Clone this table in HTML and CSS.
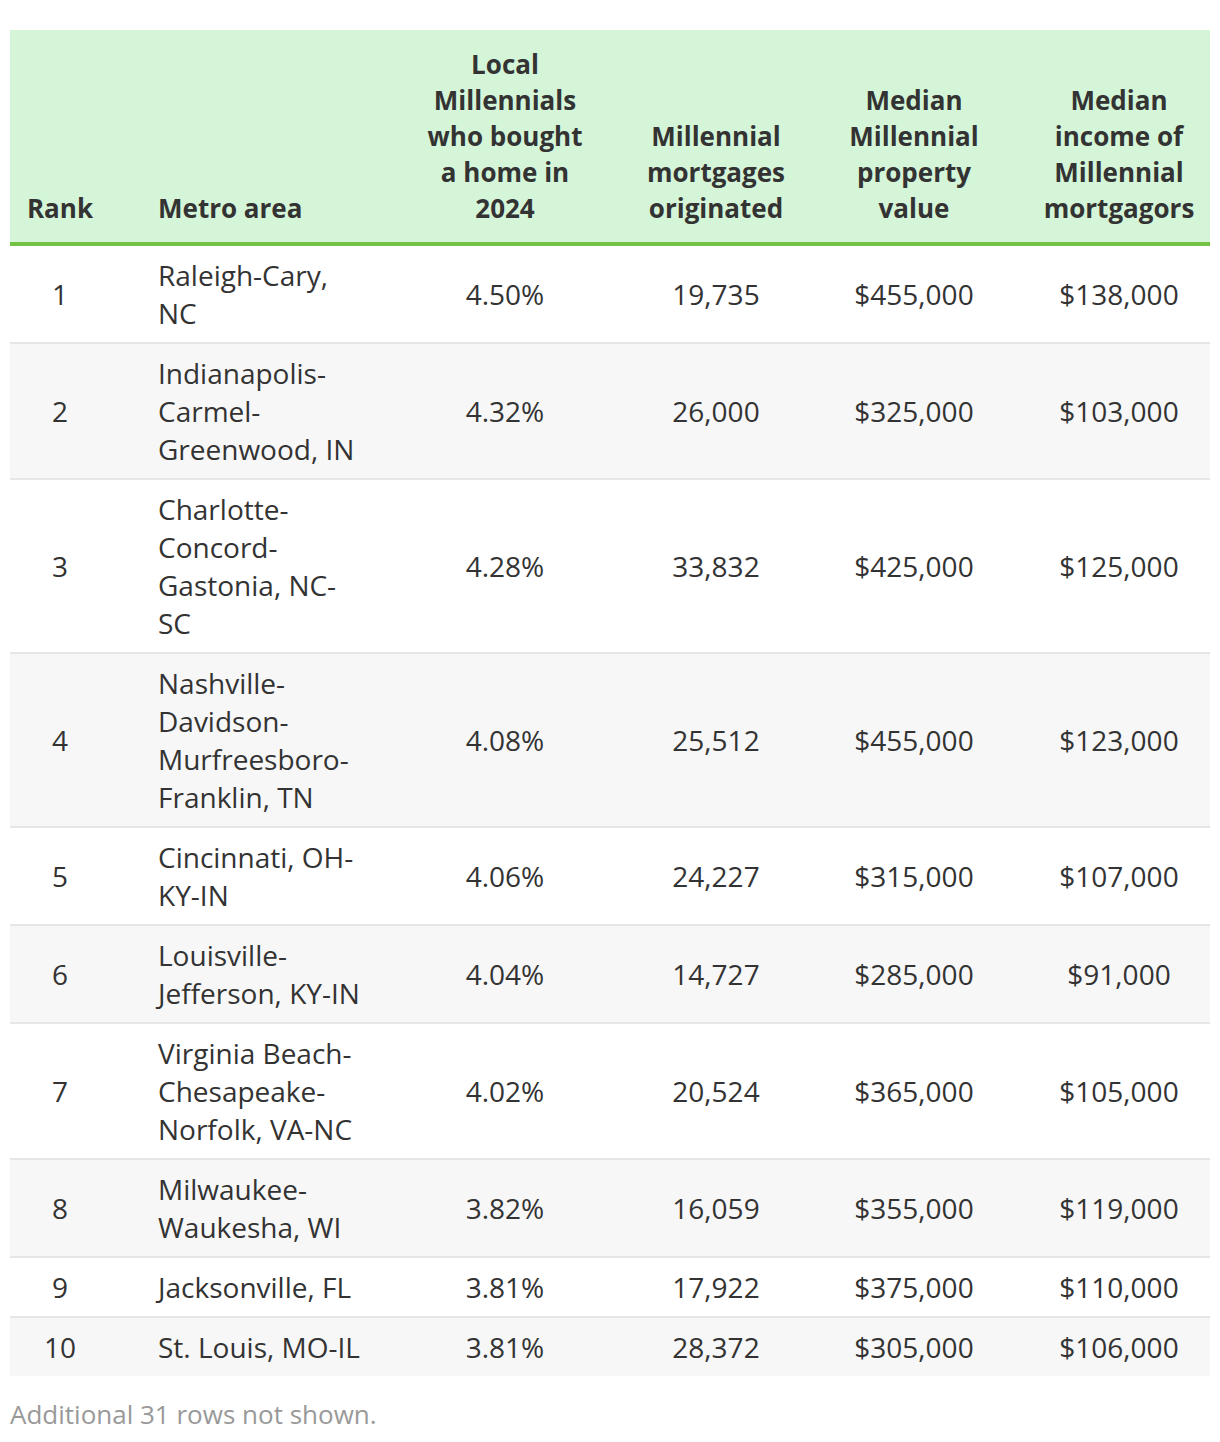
FILE: index.html
```html
<!DOCTYPE html>
<html lang="en">
<head>
<meta charset="utf-8">
<title>Millennial home buyers by metro</title>
<link rel="stylesheet" href="styles.css">
</head>
<body>
<div class="page">
  <table class="data">
    <colgroup>
      <col class="c-rank">
      <col class="c-metro">
      <col class="c-share">
      <col class="c-count">
      <col class="c-value">
      <col class="c-income">
    </colgroup>
    <thead>
      <tr>
        <th class="rank">Rank</th>
        <th class="metro">Metro area</th>
        <th class="share">Local Millennials who bought a home in 2024</th>
        <th class="count">Millennial mortgages originated</th>
        <th class="value">Median Millennial property value</th>
        <th class="income">Median income of Millennial mortgagors</th>
      </tr>
    </thead>
    <tbody>
      <tr><td class="rank">1</td><td class="metro">Raleigh-Cary, NC</td><td class="share">4.50%</td><td class="count">19,735</td><td class="value">$455,000</td><td class="income">$138,000</td></tr>
      <tr><td class="rank">2</td><td class="metro">Indianapolis-Carmel-Greenwood, IN</td><td class="share">4.32%</td><td class="count">26,000</td><td class="value">$325,000</td><td class="income">$103,000</td></tr>
      <tr><td class="rank">3</td><td class="metro">Charlotte-Concord-Gastonia, NC-SC</td><td class="share">4.28%</td><td class="count">33,832</td><td class="value">$425,000</td><td class="income">$125,000</td></tr>
      <tr><td class="rank">4</td><td class="metro">Nashville-Davidson-Murfreesboro-Franklin, TN</td><td class="share">4.08%</td><td class="count">25,512</td><td class="value">$455,000</td><td class="income">$123,000</td></tr>
      <tr><td class="rank">5</td><td class="metro">Cincinnati, OH-KY-IN</td><td class="share">4.06%</td><td class="count">24,227</td><td class="value">$315,000</td><td class="income">$107,000</td></tr>
      <tr><td class="rank">6</td><td class="metro">Louisville-Jefferson, KY-IN</td><td class="share">4.04%</td><td class="count">14,727</td><td class="value">$285,000</td><td class="income">$91,000</td></tr>
      <tr><td class="rank">7</td><td class="metro">Virginia Beach-Chesapeake-Norfolk, VA-NC</td><td class="share">4.02%</td><td class="count">20,524</td><td class="value">$365,000</td><td class="income">$105,000</td></tr>
      <tr><td class="rank">8</td><td class="metro">Milwaukee-Waukesha, WI</td><td class="share">3.82%</td><td class="count">16,059</td><td class="value">$355,000</td><td class="income">$119,000</td></tr>
      <tr><td class="rank">9</td><td class="metro">Jacksonville, FL</td><td class="share">3.81%</td><td class="count">17,922</td><td class="value">$375,000</td><td class="income">$110,000</td></tr>
      <tr><td class="rank">10</td><td class="metro">St. Louis, MO-IL</td><td class="share">3.81%</td><td class="count">28,372</td><td class="value">$305,000</td><td class="income">$106,000</td></tr>
    </tbody>
  </table>
  <p class="note">Additional 31 rows not shown.</p>
</div>
</body>
</html>
```

FILE: styles.css
```css
html, body {
  margin: 0;
  padding: 0;
  background: #ffffff;
}

.page {
  padding: 30px 10px 0;
  font-family: "Open Sans", "Noto Sans", sans-serif;
  color: #333333;
}

.data {
  width: 1200px;
  table-layout: fixed;
  border-collapse: collapse;
  border-spacing: 0;
}

.c-rank { width: 100px; }
.c-metro { width: 268px; }
.c-share { width: 254px; }
.c-count { width: 168px; }
.c-value { width: 228px; }
.c-income { width: 182px; }

.data th {
  background: #d5f5d8;
  border-bottom: 4px solid #72c344;
  font-size: 26px;
  font-weight: 700;
  line-height: 36px;
  padding-top: 16px;
  padding-bottom: 16px;
  vertical-align: bottom;
  text-align: center;
}

.data td {
  font-size: 28px;
  font-weight: 400;
  line-height: 38px;
  padding-top: 10px;
  padding-bottom: 10px;
  vertical-align: middle;
  text-align: center;
}

.data tbody tr:nth-child(even) td {
  background: #f7f7f7;
}

.data tbody tr + tr td {
  border-top: 2px solid #e6e6e6;
}

.data .rank { padding-left: 12px; padding-right: 12px; }
.data .metro { padding-left: 48px; padding-right: 14px; text-align: left; }
.data .share { padding-left: 45px; padding-right: 45px; }
.data .count { padding-left: 12px; padding-right: 12px; }
.data .value { padding-left: 30px; padding-right: 30px; }
.data .income { padding-left: 12px; padding-right: 12px; }

.note {
  margin: 19px 0 0;
  font-size: 26px;
  line-height: 38px;
  color: #999999;
}
```
